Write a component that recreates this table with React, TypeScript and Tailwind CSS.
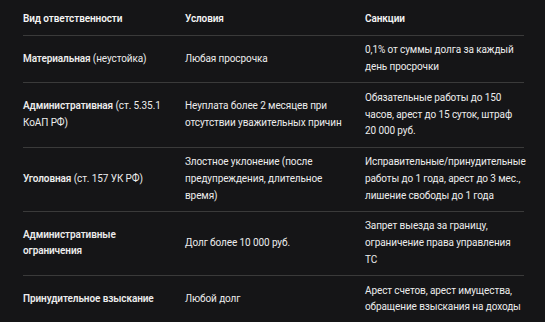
const rows: { head: React.ReactNode; cond: string; sanc: string }[] = [
  {
    head: (
      <>
        <b className="font-semibold">Материальная</b> (неустойка)
      </>
    ),
    cond: "Любая просрочка",
    sanc: "0,1% от суммы долга за каждый день просрочки",
  },
  {
    head: (
      <>
        <b className="font-semibold">Административная</b> (ст. 5.35.1 КоАП РФ)
      </>
    ),
    cond: "Неуплата более 2 месяцев при отсутствии уважительных причин",
    sanc: "Обязательные работы до 150 часов, арест до 15 суток, штраф 20 000 руб.",
  },
  {
    head: (
      <>
        <b className="font-semibold">Уголовная</b> (ст. 157 УК РФ)
      </>
    ),
    cond: "Злостное уклонение (после предупреждения, длительное время)",
    sanc: "Исправительные/\u2060принудительные работы до 1 года, арест до 3 мес., лишение свободы до 1 года",
  },
  {
    head: <b className="font-semibold">Административные ограничения</b>,
    cond: "Долг более 10 000 руб.",
    sanc: "Запрет выезда за границу, ограничение права управления ТС",
  },
  {
    head: <b className="font-semibold">Принудительное взыскание</b>,
    cond: "Любой долг",
    sanc: "Арест счетов, арест имущества, обращение взыскания на доходы",
  },
];

export default function App() {
  return (
    <div
      className="w-[545px] h-[322px] overflow-hidden bg-[#151517] text-[#ececec] text-[10px] leading-[16.75px] tracking-[-0.1px]"
      style={{ fontFamily: 'Roboto, "Noto Sans", sans-serif' }}
    >
      <div className="mx-[23px] w-[501px]">
        <div className="grid grid-cols-[162px_180px_159px] border-b border-[#3a3a3a] pt-[11px] pb-[7px] font-semibold text-[#f4f4f4]">
          <div className="pr-4">Вид ответственности</div>
          <div className="pr-4">Условия</div>
          <div>Санкции</div>
        </div>
        {rows.map((r, i) => (
          <div
            key={i}
            className="grid grid-cols-[162px_180px_159px] items-center border-b border-[#3a3a3a] py-[6.5px] last:border-b-0"
          >
            <div className="pr-4">{r.head}</div>
            <div className="pr-4">{r.cond}</div>
            <div>{r.sanc}</div>
          </div>
        ))}
      </div>
    </div>
  );
}
